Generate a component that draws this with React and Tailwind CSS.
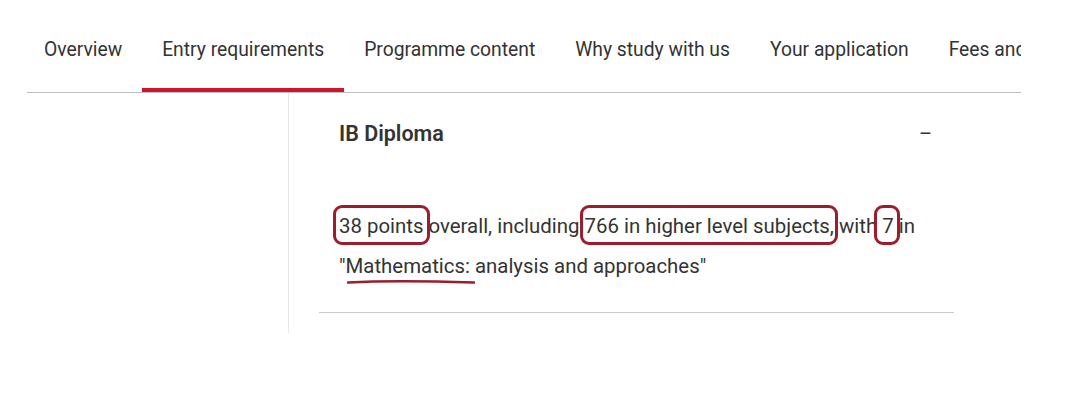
import React from 'react';

const tabs = ['Overview', 'Entry requirements', 'Programme content', 'Why study with us', 'Your application', 'Fees and funding'];

function Mark({ children, className }) {
  return (
    <span className="relative">
      {children}
      <span className={`pointer-events-none absolute rounded-[9px] border-[3px] border-[#9b1d2f] ${className}`} />
    </span>
  );
}

export default function App() {
  return (
    <div className="h-[406px] w-[1080px] overflow-hidden bg-white font-['Roboto',sans-serif] text-[#333333]">
      <nav className="ml-[27px] w-[994px] overflow-hidden border-b border-[#bdbdbd] pt-[39px]">
        <ul className="-ml-[3px] flex whitespace-nowrap">
          {tabs.map((t, i) => (
            <li
              key={t}
              className={`shrink-0 border-b-4 px-[20px] pb-[27px] text-[19.3px] leading-[22px] ${i === 1 ? 'border-[#d2132e]' : 'border-transparent'}`}
            >
              {t}
            </li>
          ))}
        </ul>
      </nav>

      <div className="flex">
        <div className="w-[288px] shrink-0" />
        <div className="h-[240px] border-l border-[#e6e6e6] pl-[30px]">
          <section className="w-[635px] border-b border-[#c5cbcf] pb-[26px] pt-[29px]">
            <div className="flex items-center justify-between pl-[20px] pr-[22px]">
              <h3 className="text-[21.5px] font-semibold leading-[24px] text-[#333333]">IB Diploma</h3>
              <span className="text-[20px] leading-[24px]">–</span>
            </div>
            <p className="mt-[60px] pl-[20px] pr-[14px] text-[20.4px] leading-[40px]">
              <Mark className="-left-[6px] -right-[7px] -top-[9px] -bottom-[7px]">38 points</Mark>{' '}overall, including{' '}
              <Mark className="-left-[5px] -right-[4px] -top-[9px] -bottom-[7px]">766 in higher level subjects,</Mark> with{' '}
              <Mark className="-left-[8px] -right-[6px] -top-[9px] -bottom-[7px]">7</Mark> in "
              <span className="relative">
                Mathematics:
                <svg className="absolute -bottom-[7px] left-[1px] h-[6px] w-[128px]" viewBox="0 0 128 6" fill="none">
                  <path d="M1 3.5 C 30 2, 70 1.8, 127 3.5" stroke="#9b1d2f" strokeWidth="2.6" strokeLinecap="round" />
                </svg>
              </span>{' '}analysis and approaches"
            </p>
          </section>
        </div>
      </div>
    </div>
  );
}
